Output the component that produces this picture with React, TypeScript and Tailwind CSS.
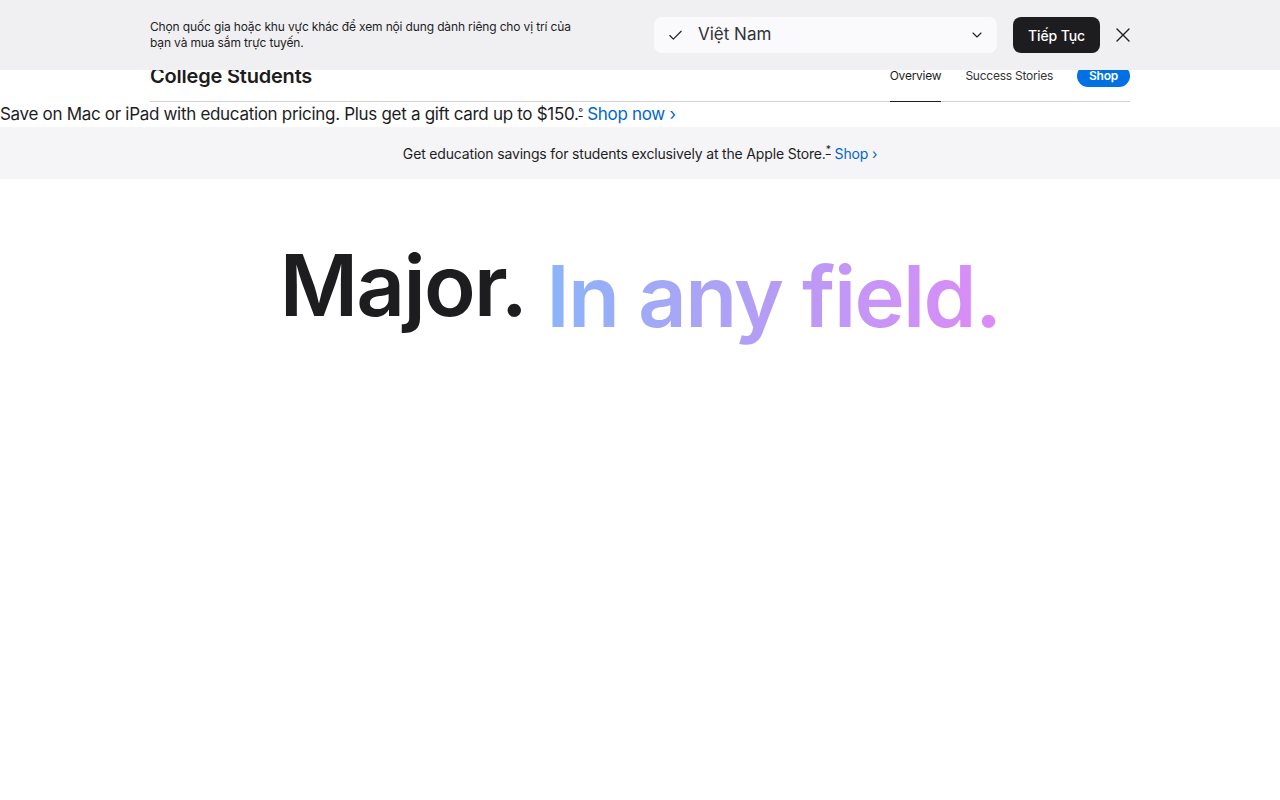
import { Check, ChevronDown } from 'lucide-react';

export default function App() {
  return (
    <div className="min-h-screen bg-white text-[#1d1d1f] font-['Inter','Noto_Sans',sans-serif]">
      {/* locale banner */}
      <div className="relative z-10 h-[70px] bg-[#f0f0f2]">
        <div className="mx-auto flex h-full w-[980px] items-center">
          <p className="w-[504px] pr-[70px] text-[12px] leading-[16px] tracking-[-0.012em] text-[#1d1d1f]">
            Chọn quốc gia hoặc khu vực khác để xem nội dung dành riêng cho vị trí của bạn và mua sắm trực tuyến.
          </p>
          <div className="flex h-[36px] w-[343px] items-center rounded-lg bg-[#fafafc] pl-[13px] pr-[12px]">
            <Check size={17} strokeWidth={1.6} className="text-[#1d1d1f]" />
            <span className="ml-[14px] flex-1 text-[17px] text-[#333336]">Việt Nam</span>
            <ChevronDown size={16} strokeWidth={1.6} className="text-[#1d1d1f]" />
          </div>
          <button className="ml-4 h-[36px] w-[87px] rounded-lg bg-[#1d1d1f] text-[14px] font-medium tracking-[-0.01em] text-white">
            Tiếp Tục
          </button>
          <svg width="14" height="14" viewBox="0 0 14 14" className="ml-4 text-[#1d1d1f]">
            <path d="M1 1 L13 13 M13 1 L1 13" stroke="currentColor" strokeWidth="1.4" strokeLinecap="round" />
          </svg>
        </div>
      </div>

      {/* local nav, partly under banner */}
      <div className="-mt-[18px] mx-auto flex h-[50px] w-[980px] items-center border-b border-[#d2d2d7]">
        <h2 className="flex-1 pb-[2px] text-[20px] font-semibold tracking-[-0.01em]">College Students</h2>
        <div className="flex h-full items-center gap-6 text-[12px] tracking-[-0.02em]">
          <span className="relative flex h-full items-center pb-[2px] text-[#1d1d1f]">
            Overview
            <span className="absolute -bottom-px left-0 right-0 h-px bg-[#1d1d1f]" />
          </span>
          <span className="pb-[2px] text-[#333336]">Success Stories</span>
          <span className="mb-[2px] flex h-[22px] items-center rounded-full bg-[#0071e3] px-[12px] font-semibold text-white">
            Shop
          </span>
        </div>
      </div>

      <p className="h-[25px] text-[17px] leading-[25px] tracking-[-0.018em]">
        Save on Mac or iPad with education pricing. Plus get a gift card up to $150.
        <sup className="text-[10px] underline">º</sup>{' '}
        <span className="text-[#0066cc]">Shop now ›</span>
      </p>

      <div className="flex h-[52px] items-center justify-center bg-[#f5f5f7] text-[14px] tracking-[-0.012em]">
        <span>
          Get education savings for students exclusively at the Apple Store.
          <sup className="underline">*</sup>{' '}
          <span className="text-[#0066cc]">Shop ›</span>
        </span>
      </div>

      <div className="flex justify-center pt-[64px]">
        <h1 className="flex items-baseline gap-[20px] text-[85px] font-semibold leading-none tracking-[-0.02em]">
          <span>Major.</span>
          <span className="translate-y-[11px] bg-gradient-to-r from-[#8bb4f8] via-[#b59cf5] to-[#dc8bf6] bg-clip-text pb-[20px] text-transparent">
            In any field.
          </span>
        </h1>
      </div>
    </div>
  );
}
